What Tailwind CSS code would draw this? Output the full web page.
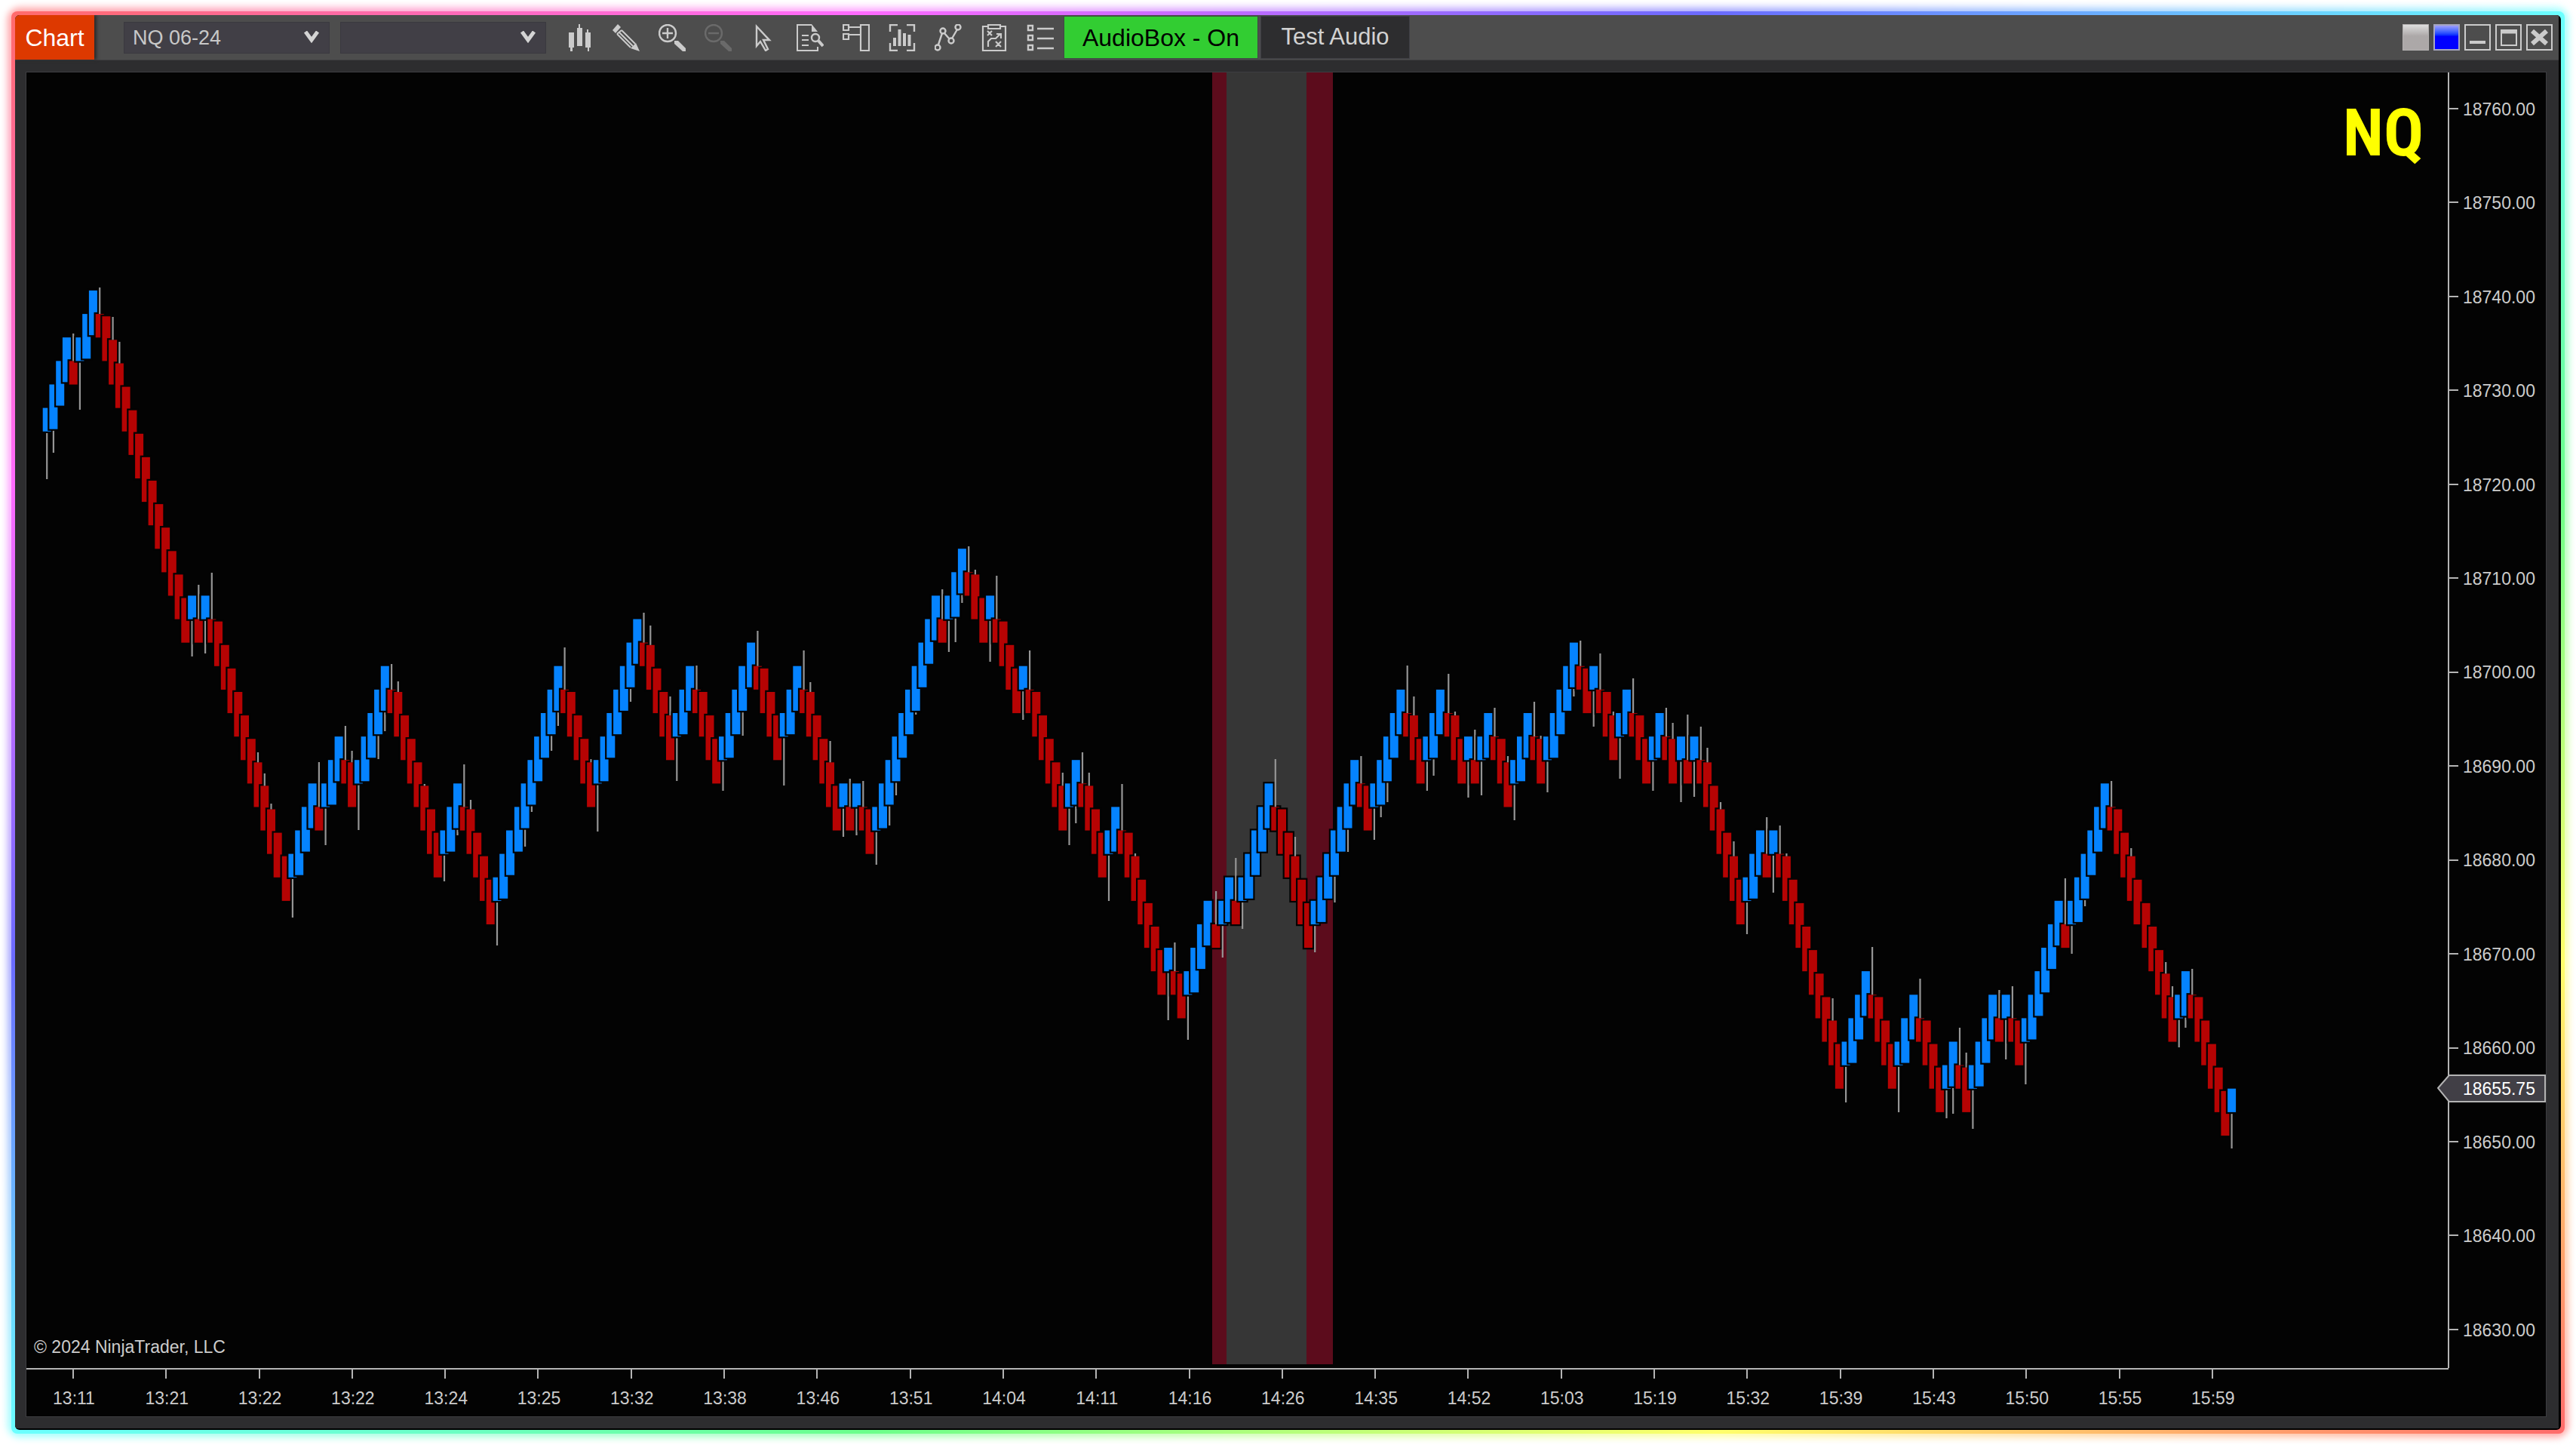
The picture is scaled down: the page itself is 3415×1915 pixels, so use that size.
<!DOCTYPE html>
<html lang="en">
<head>
  <meta charset="UTF-8" />
  <meta name="viewport" content="width=device-width, initial-scale=1.0"/>
  <title>Chart - NQ 06-24</title>
  <script src="https://cdn.jsdelivr.net/npm/@tailwindcss/browser@4"></script>
</head>
<body class="bg-white font-['Liberation_Sans',Arial,sans-serif]">

<div class="relative h-screen p-5 overflow-hidden">
  <!-- Rainbow glow -->
  <div class="absolute inset-[10px] rounded-2xl blur-[5px] opacity-60 bg-[linear-gradient(to_bottom_right,#ff6b6b,#ff6bff,#6b6bff,#6bffff,#6bff8b,#ffff6b,#ff6b6b)]"></div>
  <div class="absolute inset-[15px] rounded-lg bg-[linear-gradient(to_bottom_right,#ff6b6b,#ff6bff,#6b6bff,#6bffff,#6bff8b,#ffff6b,#ff6b6b)]"></div>

  <div class="relative h-full bg-black rounded-md overflow-hidden pr-[3px] pb-[2px]">
  <div class="h-full flex flex-col bg-[#2d2d2f]">

    <!-- Toolbar -->
    <header class="h-[60px] shrink-0 flex items-center bg-[#4d4d4d] border-b border-[#3f3f42] pr-2">
      <h1 class="h-full w-[105px] flex items-center justify-center bg-[#dd3900] text-white text-[32px] shadow-[3px_0_4px_#2b2b2b]">Chart</h1>

      <div class="relative ml-[39px]">
        <select aria-label="Instrument" class="block appearance-none w-[273px] h-[42px] pl-[11px] bg-[#413f46] border border-[#3a393f] text-[#c8c8c8] text-[27px]">
          <option>NQ 06-24</option>
        </select>
        <svg class="absolute right-3 top-3 w-6 h-[18px] pointer-events-none" viewBox="0 0 24 18" fill="none" stroke="#d4d4d4" stroke-width="5"><path d="M4 1l8 11 8-11"/></svg>
      </div>
      <div class="relative ml-[14px]">
        <select aria-label="Interval" class="block appearance-none w-[273px] h-[42px] pl-[11px] bg-[#413f46] border border-[#3a393f] text-[#c8c8c8] text-[27px]">
          <option></option>
        </select>
        <svg class="absolute right-3 top-3 w-6 h-[18px] pointer-events-none" viewBox="0 0 24 18" fill="none" stroke="#d4d4d4" stroke-width="5"><path d="M4 1l8 11 8-11"/></svg>
      </div>

      <nav class="ml-[27px] flex gap-[25px] text-[#cbcbcb]">
        <button aria-label="Chart style" class="w-9 h-9">
          <svg viewBox="0 0 36 36" fill="currentColor"><path d="M3 11h7v20H8v5H5v-5H3zM14 5h2V0h2v5h3v24h-7zM25 11h2V7h2v4h3v20h-2v5h-2v-5h-3z"/></svg>
        </button>
        <button aria-label="Drawing tools" class="w-9 h-9">
          <svg viewBox="0 0 36 36" fill="none" stroke="currentColor" stroke-width="2"><path d="M0 8L7 0l4 4-7 8z" fill="currentColor" stroke="none"/><path d="M6 13l18 18M9 11l18 18M12 8l18 18M6 13l6-5"/><path d="M24 32l7-7 5 11z" fill="currentColor" stroke="none"/></svg>
        </button>
        <button aria-label="Zoom in" class="w-9 h-9">
          <svg viewBox="0 0 36 36" fill="none" stroke="currentColor"><circle cx="12" cy="12" r="11" stroke-width="2.4"/><path d="M12 5v14M5 12h14" stroke-width="2.4"/><path d="M21 22l5 0 10 10v4h-4L21 26z" fill="currentColor" stroke="none"/></svg>
        </button>
        <button aria-label="Zoom out" disabled class="w-9 h-9 text-[#6a6a6a]">
          <svg viewBox="0 0 36 36" fill="none" stroke="currentColor"><circle cx="12" cy="12" r="11" stroke-width="2.4"/><path d="M5 12h14" stroke-width="2.4"/><path d="M21 22l5 0 10 10v4h-4L21 26z" fill="currentColor" stroke="none"/></svg>
        </button>
        <button aria-label="Cursor" class="w-9 h-9">
          <svg viewBox="0 0 36 36" fill="none" stroke="currentColor" stroke-width="2.4"><path d="M8 3v26l5-6 7 12 3-2-6-12h8z"/></svg>
        </button>
        <button aria-label="Data box" class="w-9 h-9">
          <svg viewBox="0 0 36 36" fill="none" stroke="currentColor" stroke-width="2"><path d="M28 30v5H1V1h19"/><path d="M20 0l8 10h-8z" fill="currentColor" stroke="none"/><path d="M7 15h9M7 21h9M7 28h9"/><circle cx="25" cy="18" r="5" stroke-width="2.4"/><path d="M29 22l6 7" stroke-width="4"/></svg>
        </button>
        <button aria-label="Chart trader" class="w-9 h-9">
          <svg viewBox="0 0 36 36" fill="none" stroke="currentColor" stroke-width="2.2"><path d="M1 1h7v7H1zM1 13h7v7H1zM24 1h11v34H24zM8 4h16M8 14h16"/></svg>
        </button>
        <button aria-label="Indicators" class="w-9 h-9">
          <svg viewBox="0 0 36 36" fill="none" stroke="currentColor" stroke-width="2.4"><path d="M2 10V1h10M24 1h10v9M34 25v10H24M12 35H2V25"/><path d="M8 29V18M14.500 29V7M21 29V12M27.500 29V14" stroke-width="4"/></svg>
        </button>
        <button aria-label="Strategies" class="w-9 h-9">
          <svg viewBox="0 0 36 36" fill="none" stroke="currentColor" stroke-width="2.4"><circle cx="4" cy="31" r="3.500"/><circle cx="11" cy="9" r="3.500"/><circle cx="22" cy="22" r="3.500"/><circle cx="31" cy="4" r="3.500"/><path d="M5 27l5-15M13 12l7 8M23 19l7-12"/></svg>
        </button>
        <button aria-label="Trade performance" class="w-9 h-9">
          <svg viewBox="0 0 36 36" fill="none" stroke="currentColor" stroke-width="2.200"><path d="M9 3H3v32h30V3h-6"/><path d="M10 1h16v5H10zM9 9l6 6M15 9l-6 6M20 23l7 7M27 23l-7 7M10 30v-7l4-4h6l6-6M21 13h6v6"/></svg>
        </button>
        <button aria-label="Properties" class="w-9 h-9">
          <svg viewBox="0 0 36 36" fill="none" stroke="currentColor" stroke-width="2.400"><path d="M2 2h6v6H2zM2 15h6v6H2zM2 28h6v6H2zM14 6h22M14 19h22M14 32h22"/></svg>
        </button>
      </nav>

      <button class="ml-[13px] w-[258px] h-[57px] bg-[#32cd32] border border-[#3f4a44] text-black text-[32px]">AudioBox - On</button>
      <button class="ml-[3px] w-[198px] h-[57px] bg-[#2d2d2f] border border-[#3f3f45] text-[#d2d2d2] text-[31px]">Test Audio</button>

      <div class="ml-auto flex gap-[6px] text-[#cbcbcb]">
        <button aria-label="Instrument link" class="w-[35px] h-[35px] border border-[#b5b2b2] bg-linear-to-b from-[#dedede] to-[#aca8a8] to-45%"></button>
        <button aria-label="Interval link" class="w-[35px] h-[35px] border-2 border-[#a5a5c0] bg-linear-to-b from-[#9c9cff] to-[#0000ff] to-45%"></button>
        <button aria-label="Minimize" class="w-[35px] h-[35px] border-2 border-current">
          <svg viewBox="0 0 31 31" stroke="currentColor" stroke-width="4"><path d="M5 22h21"/></svg>
        </button>
        <button aria-label="Maximize" class="w-[35px] h-[35px] border-2 border-current">
          <svg viewBox="0 0 31 31" fill="none" stroke="currentColor" stroke-width="2"><path d="M6 6h20v20H6z"/><path d="M5 8h22" stroke-width="5"/></svg>
        </button>
        <button aria-label="Close" class="w-[35px] h-[35px] border-2 border-current">
          <svg viewBox="0 0 31 31" stroke="currentColor" stroke-width="6"><path d="M6 7l19 17M25 7L6 24"/></svg>
        </button>
      </div>
    </header>

    <!-- Chart -->
    <main class="grow min-h-0 pt-[15px] pl-[14px] pr-4 pb-[15px]">
      <div class="h-full flex flex-col bg-[#030303] border border-[#3d3d41] text-[#cccccc] text-[23px]">

        <div class="grow min-h-0 flex">
          <section class="relative grow">
            <svg id="plot" class="absolute inset-0 w-full h-full" viewBox="0 0 3210 1717" preserveAspectRatio="none">
              <rect x="1572" y="0" width="160" height="1712" fill="#5c0c1c"/>
              <rect x="1591" y="0" width="106" height="1712" fill="#363636"/>
            </svg>
            <p class="absolute right-8 top-[24px] text-[#ffff00] font-bold text-[88px] leading-[112px] font-['Liberation_Sans_Narrow','Roboto_Condensed','Liberation_Sans',sans-serif]">NQ</p>
            <p class="absolute left-[10px] bottom-[12px] leading-8">© 2024 NinjaTrader, LLC</p>
          </section>

          <aside class="relative w-[130px] border-l-2 border-[#b4b4b4]">
            <ul id="prices" class="h-full flex flex-col justify-between pt-[34px] pb-[37px]"></ul>
            <div class="absolute -left-4 -right-px top-[1328px] h-[37px]">
              <svg class="absolute inset-0 w-full h-full" viewBox="0 0 147 37" preserveAspectRatio="none"><path d="M1 18L16 1h129v35H16z" fill="#413f46" stroke="#b4b4b4" stroke-width="2"/></svg>
              <span class="relative block pl-[34px] leading-[38px] text-white">18655.75</span>
            </div>
          </aside>
        </div>

        <footer class="h-[64px] shrink-0 pr-[129px]">
          <ul id="times" class="h-full flex justify-between pl-[22px] pr-[273px] border-t-2 border-[#b4b4b4]"></ul>
        </footer>
      </div>
    </main>
  </div>
  </div>
</div>

<script>
  const TOP_PRICE = 18760, TOP_Y = 48, PX_PER_POINT = 12.443;
  const BASE = 18655.75, BRICK = 2.5, TICK = 0.25;
  const UNIT = 2.186;

  // bars per swing, starting with an up swing and alternating
  const swings = [
    4,1,3,14,1,1,1,12,4,1,3,2,5,8,3,5,10,5,7,5,3,4,5,4,3,6,1,1,1,2,10,1,3,3,1,4,1,6,
    2,4,2,7,1,2,4,1,2,1,5,6,7,2,5,3,3,3,1,1,2,3,3,2,5,2,1,3,2,3,2,2,1,1,1,7,3,1,1,10,
    4,4,3,4,2,2,4,1,1,2,6,1,6,10,2,6,1
  ];

  // bar index: y where its wick ends, counted from the top of the window
  const wicks = {
    0:635, 1:600, 4:442, 5:543, 8:381, 10:420, 11:453, 22:870, 23:775, 24:866, 25:759,
    32:997, 33:1025, 34:1065, 37:1216, 41:1010, 42:1120, 45:962, 46:995, 47:1100, 50:1006,
    51:969, 52:880, 53:903, 57:1039, 60:1168, 62:1107, 63:1013, 64:1060, 68:1253, 72:1122,
    73:1076, 76:995, 77:962, 78:858, 82:1006, 83:1102, 88:930, 90:812, 91:829, 94:923,
    95:1035, 98:882, 102:1048, 105:975, 107:836, 111:1041, 114:862, 115:904, 118:982,
    120:1109, 121:1032, 122:1107, 123:1035, 125:1146, 127:1094, 128:1054, 131:947, 135:781,
    136:864, 137:851, 138:799, 139:724, 140:755, 142:877, 143:763, 147:954, 148:862,
    153:1024, 154:1120, 155:1091, 156:997, 157:1024, 160:1194, 162:1039, 164:1131, 169:1352,
    170:1249, 172:1378, 176:1181, 177:1269, 179:1137, 180:1231, 185:1006, 188:1109, 191:1262,
    194:1196, 196:1129, 198:1002, 200:1113, 201:1083, 202:1063, 205:882, 206:923, 208:1048,
    209:1028, 211:893, 212:943, 214:1057, 215:967, 216:1054, 218:938, 220:1002, 221:1087,
    224:930, 225:975, 226:1050, 230:923, 231:849, 233:963, 234:866, 236:943, 237:1032,
    239:899, 242:1048, 244:938, 245:958, 246:1063, 247:947, 248:1056, 249:963, 250:991,
    252:1063, 254:1115, 256:1238, 259:1083, 260:1183, 261:1094, 262:1131, 269:1323, 271:1461,
    275:1255, 279:1474, 282:1297, 286:1482, 287:1476, 288:1362, 289:1395, 290:1496, 294:1312,
    295:1404, 296:1307, 298:1437, 304:1164, 305:1264, 307:1201, 311:1035, 314:1124, 319:1275,
    320:1307, 321:1388, 322:1362, 323:1284, 329:1522
  };

  const yOf = price => TOP_Y + (TOP_PRICE - price) * PX_PER_POINT;
  const plot = document.getElementById('plot');

  function rect(x, y, w, h, fill) {
    return `<rect x="${x.toFixed(1)}" y="${y.toFixed(1)}" width="${w}" height="${h.toFixed(1)}" fill="${fill}"/>`;
  }

  let level = 28, bar = 0, shapes = '';
  swings.forEach((count, s) => {
    const up = s % 2 === 0;
    for (let n = 0; n < count; n++, bar++) {
      const turn = n === 0;
      const step = turn && bar > 0 ? 2 : 1;
      level += up ? step : -step;
      const close = BASE + level * BRICK;
      let high, low;
      if (up) {
        high = close;
        low = turn ? close - BRICK - TICK : close - 2 * BRICK;
      } else {
        low = close - TICK;
        high = turn ? close + BRICK : low + 2 * BRICK;
      }
      const x = 21.7 + UNIT * (4 * bar + Math.max(0, Math.floor((bar - 1) / 35)));
      const top = yOf(high) + 1.5, bottom = yOf(low) - 1.5;
      shapes += rect(x - 2.2, top - 2.2, 15.4, bottom - top + 4.4, '#030303');
      shapes += rect(x, top, 11, bottom - top, up ? '#0583ff' : '#b60303');
      if (wicks[bar]) {
        const end = wicks[bar] - 96;
        if (end < top) shapes += rect(x + 4.4, end, 2.2, top - end, '#959595');
        else shapes += rect(x + 4.4, bottom + 2.2, 2.2, Math.max(0, end - bottom - 2.2), '#959595');
      }
    }
  });
  plot.insertAdjacentHTML('beforeend', shapes);

  const prices = document.getElementById('prices');
  for (let p = 18760; p >= 18630; p -= 10) {
    prices.insertAdjacentHTML('beforeend', `
      <li class="flex items-center gap-[6px] h-7"><span class="w-3 h-[2px] bg-[#b4b4b4]"></span><span class="pt-[2px]">${p.toFixed(2)}</span></li>`);
  }

  const times = ['13:11','13:21','13:22','13:22','13:24','13:25','13:32','13:38','13:46','13:51','14:04','14:11',
    '14:16','14:26','14:35','14:52','15:03','15:19','15:32','15:39','15:43','15:50','15:55','15:59'];
  document.getElementById('times').innerHTML = times.map(t => `
    <li class="w-20 flex flex-col items-center gap-[10px]"><span class="w-[2px] h-3 bg-[#b4b4b4]"></span><span class="pl-[2px] leading-8">${t}</span></li>`).join('');
</script>
</body>
</html>
